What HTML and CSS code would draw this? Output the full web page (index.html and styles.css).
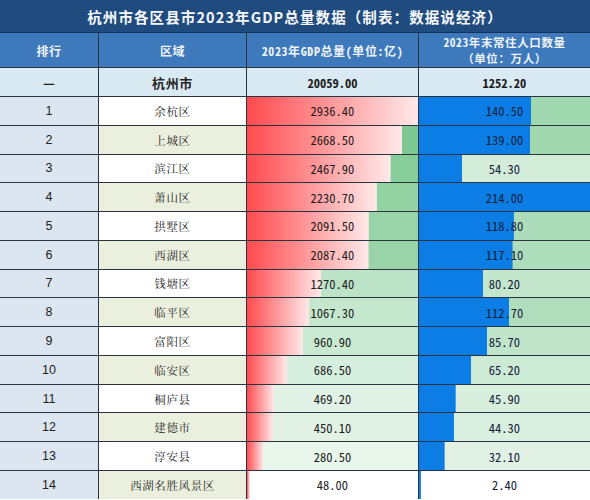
FILE: index.html
```html
<!DOCTYPE html>
<html lang="zh-CN">
<head>
    <meta charset="UTF-8">
    <meta name="viewport" content="width=device-width, initial-scale=1.0">
    <title>杭州市各区县市2023年GDP总量数据</title>
    <link rel="stylesheet" href="styles.css">
</head>
<body>

<div class="sheet">
    <div class="title">杭州市各区县市2023年GDP总量数据（制表：数据说经济）</div>
    <div class="grid" id="grid">
        <div class="cell head">排行</div>
        <div class="cell head">区域</div>
        <div class="cell head">2023年GDP总量(单位:亿)</div>
        <div class="cell head head-two">
            <span>2023年末常住人口数量</span>
            <span>（单位：万人）</span>
        </div>

        <div class="cell total">—</div>
        <div class="cell total name">杭州市</div>
        <div class="cell total num">20059.00</div>
        <div class="cell total num">1252.20</div>
        <!-- district rows are added by the script below -->
    </div>
</div>

<script>
    const rows = [
        ["余杭区", 2936.40, 140.50],
        ["上城区", 2668.50, 139.00],
        ["滨江区", 2467.90, 54.30],
        ["萧山区", 2230.70, 214.00],
        ["拱墅区", 2091.50, 118.80],
        ["西湖区", 2087.40, 117.10],
        ["钱塘区", 1270.40, 80.20],
        ["临平区", 1067.30, 112.70],
        ["富阳区", 960.90, 85.70],
        ["临安区", 686.50, 65.20],
        ["桐庐县", 469.20, 45.90],
        ["建德市", 450.10, 44.30],
        ["淳安县", 280.50, 32.10],
        ["西湖名胜风景区", 48.00, 2.40]
    ];

    const grid = document.getElementById('grid');

    // white -> green colour scale, like the spreadsheet's conditional format
    function scaleColor(value, min, max) {
        if (value <= min) return '#ffffff';
        const f = (value - min) / (max - min);
        const t = 0.08 + 0.82 * f;
        const mix = (a, b) => Math.round(a + (b - a) * t);
        return `rgb(${mix(255, 99)}, ${mix(255, 190)}, ${mix(255, 123)})`;
    }

    function makeCell(className, text) {
        const cell = document.createElement('div');
        cell.className = 'cell ' + className;
        cell.textContent = text;
        grid.appendChild(cell);
        return cell;
    }

    const gdpValues = rows.map(r => r[1]);
    const popValues = rows.map(r => r[2]);
    const gdpMax = Math.max(...gdpValues), gdpMin = Math.min(...gdpValues);
    const popMax = Math.max(...popValues), popMin = Math.min(...popValues);

    rows.forEach((row, index) => {
        const [name, gdp, pop] = row;
        makeCell('rank', index + 1);
        makeCell('name ' + (index % 2 ? 'alt' : ''), name);

        const gdpCell = makeCell('num gdp', gdp.toFixed(2));
        gdpCell.style.setProperty('--w', (gdp / gdpMax * 100).toFixed(2) + '%');
        gdpCell.style.setProperty('--bg', scaleColor(gdp, gdpMin, gdpMax));

        const popCell = makeCell('num pop', pop.toFixed(2));
        popCell.style.setProperty('--w', (pop / popMax * 100).toFixed(2) + '%');
        popCell.style.setProperty('--bg', scaleColor(pop, popMin, popMax));
    });
</script>

</body>
</html>
```

FILE: styles.css
```css
body {
    margin: 0;
    background-color: #ffffff;
    font-family: "Noto Sans CJK SC", "Liberation Sans", sans-serif;
    overflow: hidden;
}

.sheet {
    width: 590px;
}

.title {
    height: 32px;
    background-color: #1f4b7e;
    border-bottom: 1px solid #13335a;
    color: #f6f8fc;
    font-size: 14.5px;
    font-weight: bold;
    letter-spacing: 1.1px;
    display: flex;
    align-items: center;
    justify-content: center;
}

.grid {
    display: grid;
    grid-template-columns: 98px 147px 171px 171px;
    grid-template-rows: 34px 28px repeat(14, 27.77px);
    gap: 1px;
    background-color: #2a3340;
}

.cell {
    display: flex;
    align-items: center;
    justify-content: center;
    color: #1c1c1c;
    font-size: 12px;
    white-space: nowrap;
}

/* header row */
.head {
    background-color: #3d79bb;
    color: #eef3fa;
    font-weight: bold;
    letter-spacing: 0.6px;
    font-family: "Noto Sans Mono CJK SC", "Noto Sans CJK SC", sans-serif;
}

.head-two {
    flex-direction: column;
    gap: 1px;
    font-size: 11.5px;
    line-height: 15px;
}

/* city total row */
.total {
    background-color: #daeaf2;
    font-weight: bold;
    font-size: 13px;
}

.rank {
    background-color: #dce6f1;
    font-family: "Liberation Sans", Arial, sans-serif;
    font-size: 12.5px;
    color: #222222;
}

.name {
    background-color: #ffffff;
    font-family: "Noto Serif CJK SC", "Noto Sans CJK SC", serif;
    font-size: 11.5px;
    letter-spacing: 0.6px;
    color: #262626;
}

.name.alt {
    background-color: #ebf0de;
}

.total.name {
    background-color: #daeaf2;
    font-family: "Noto Sans CJK SC", sans-serif;
    font-size: 13px;
}

.num {
    font-family: "Noto Sans Mono CJK SC", "DejaVu Sans Mono", monospace;
    font-size: 12.5px;
}

/* data bars drawn as sized backgrounds over the colour scale */
.gdp {
    background: linear-gradient(to right, #ff4b4f, #ffe9e9) no-repeat left top / var(--w) 100%, var(--bg);
}

.pop {
    background: linear-gradient(#0b7de4, #0b7de4) no-repeat left top / var(--w) 100%, var(--bg);
    color: #14213a;
}
```
